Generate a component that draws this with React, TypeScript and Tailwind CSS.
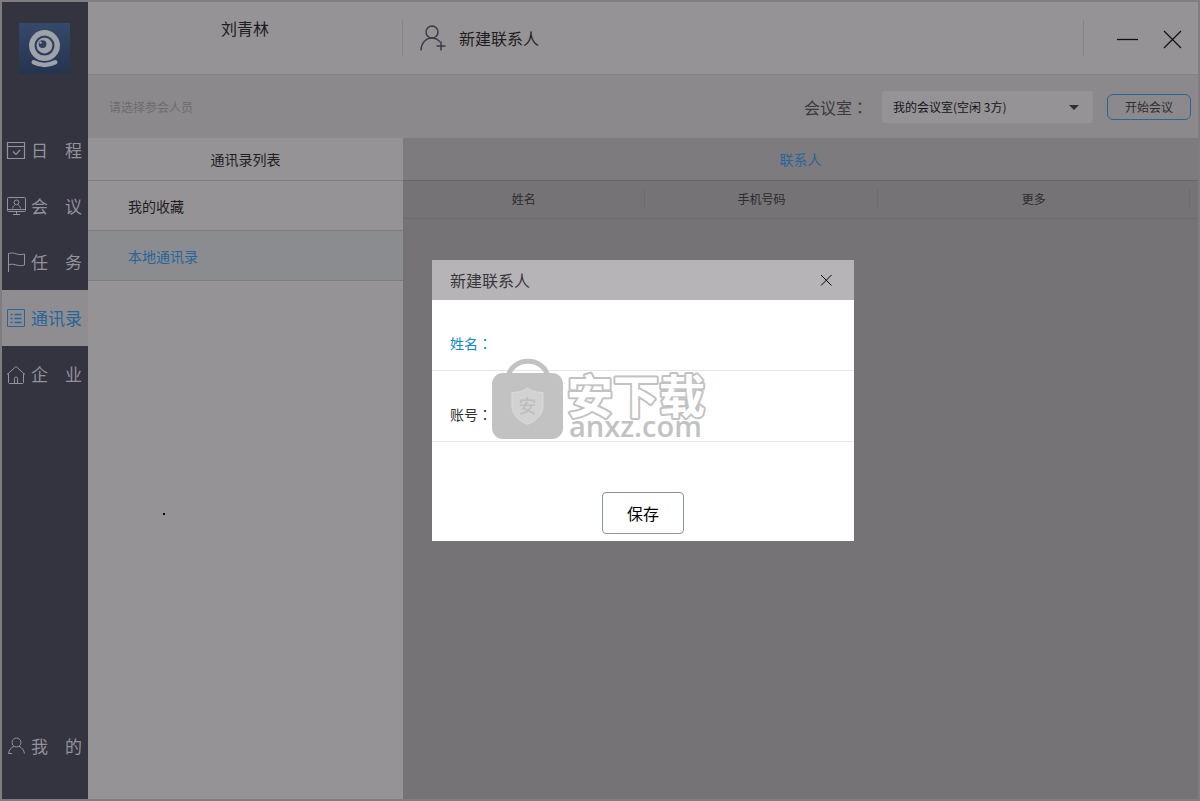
import type { ReactNode } from "react";

type IconProps = { children: ReactNode };

function NavIcon({ children }: IconProps) {
  return (
    <svg
      className="h-5 w-5 shrink-0"
      viewBox="0 0 20 20"
      fill="none"
      stroke="currentColor"
      aria-hidden="true"
    >
      {children}
    </svg>
  );
}

const navItems = [
  {
    label: "日　程",
    icon: (
      <NavIcon>
        <path d="M1.5 2.5h17v16h-17zM1.5 6.5h17M7 11.5l3 3 4-4.5" strokeWidth="1.2" />
      </NavIcon>
    ),
  },
  {
    label: "会　议",
    icon: (
      <NavIcon>
        <path d="M2.5 1.5h16a1 1 0 0 1 1 1v12a1 1 0 0 1-1 1h-16a1 1 0 0 1-1-1v-12a1 1 0 0 1 1-1zM1.5 13.5h18M10.5 15.5v3M7 18.5h7" />
        <path d="M10.5 4a2.400 2.400 0 1 1 0 4.800a2.400 2.400 0 1 1 0-4.800M6.5 12.500c.3-2 1.500-3 2.800-3.800M14.500 12.500c-.3-2-1.500-3-2.800-3.800" />
      </NavIcon>
    ),
  },
  {
    label: "任　务",
    icon: (
      <NavIcon>
        <path d="M2.5 20V1.500c3-.8 5-.6 7.500.3s5 1 8.500.2v11c-3 1-5.500.8-8.500-.1s-5-.9-7.500 0" />
      </NavIcon>
    ),
  },
  {
    label: "通讯录",
    active: true,
    icon: (
      <NavIcon>
        <path d="M1.5 1.5h17v17h-17z" />
        <path d="M4.5 6.500h2M4.500 10.500h2M4.500 14.500h2M8.500 6.500h7M8.500 10.500h7M8.500 14.500h7" strokeWidth="1.300" />
      </NavIcon>
    ),
  },
  {
    label: "企　业",
    icon: (
      <NavIcon>
        <path d="M1 10.500L10 2.500l9 8M2.500 9.500v9a1 1 0 0 0 1 1h13a1 1 0 0 0 1-1v-9M8.500 19.500v-5a1.500 1.500 0 0 1 3 0v5" />
      </NavIcon>
    ),
  },
];

function NavLink({ label, icon, active }: { label: string; icon: ReactNode; active?: boolean }) {
  return (
    <a
      href="#"
      className={
        "flex h-14 items-center gap-[5px] pl-1 text-[17px] leading-6 whitespace-nowrap " +
        (active ? "bg-[#8f8d90] text-[#28659a]" : "text-[#92929a]")
      }
    >
      {icon}
      <span>{label}</span>
    </a>
  );
}

function Logo() {
  return (
    <svg className="mt-[21px] ml-[17px] h-[51px] w-[51px]" viewBox="0 0 52 52" role="img" aria-label="Logo">
      <defs>
        <linearGradient id="logo-bg" x1="0" y1="0" x2="0" y2="1">
          <stop offset="0" stopColor="#35496b" />
          <stop offset="1" stopColor="#23344e" />
        </linearGradient>
      </defs>
      <rect width="52" height="52" fill="url(#logo-bg)" />
      <circle cx="26" cy="23" r="13" fill="none" stroke="#a0a2a9" strokeWidth="5.500" />
      <circle cx="26" cy="23" r="8" fill="#a0a2a9" />
      <circle cx="24" cy="21.500" r="4" fill="#2d405f" />
      <circle cx="22" cy="20" r="1.200" fill="#a0a2a9" />
      <path d="M15 40q11 5.500 22 0" fill="none" stroke="#a0a2a9" strokeWidth="4.500" strokeLinecap="round" />
    </svg>
  );
}

function Sidebar() {
  return (
    <aside className="flex w-[86px] shrink-0 flex-col bg-[#343441]">
      <Logo />
      <nav className="mt-12 flex flex-1 flex-col pb-[25px]">
        {navItems.map((item) => (
          <NavLink key={item.label} {...item} />
        ))}
        <div className="mt-auto">
          <NavLink
            label="我　的"
            icon={
              <NavIcon>
                <path d="M10.5 2a4.500 4.500 0 1 1 0 9a4.500 4.500 0 1 1 0-9M8 10.300C5 11.500 3 14 2.500 17.500H6M13 10.300c3 1.200 4.800 3.700 5.500 7.200" />
              </NavIcon>
            }
          />
        </div>
      </nav>
    </aside>
  );
}

function Header() {
  return (
    <header className="flex h-[73px] items-center border-b border-[#858387] bg-[#969396] text-base text-[#1d1c20]">
      <div className="flex w-[314px] shrink-0 justify-center self-stretch pt-[14px]">
        <span className="leading-6">刘青林</span>
      </div>
      <div className="h-9 w-px bg-[#858387]" />
      <button type="button" className="flex items-center gap-3 pl-4">
        <svg className="h-7 w-7" viewBox="0 0 28 28" fill="none" stroke="#3c3c48" strokeWidth="1.500" aria-hidden="true">
          <circle cx="13" cy="8" r="6" />
          <path d="M2 26.500c0-7 4.500-12.500 11-12.500c3.500 0 6 1.500 8 4M22 17.500v9M17.500 22h9" />
        </svg>
        新建联系人
      </button>
      <div className="ml-auto h-9 w-px bg-[#858387]" />
      <button type="button" aria-label="最小化" className="ml-8">
        <svg className="h-6 w-6" viewBox="0 0 24 24" stroke="#111" aria-hidden="true">
          <path d="M1 13.500h21" strokeWidth="1.300" />
        </svg>
      </button>
      <button type="button" aria-label="关闭" className="mr-[14px] ml-5">
        <svg className="h-6 w-6" viewBox="0 0 24 24" stroke="#111" strokeWidth="1.200" aria-hidden="true">
          <path d="M4 5l17 17M21 5L4 22" />
        </svg>
      </button>
    </header>
  );
}

// The TC face centres the full-width colon in its em box.
function Colon() {
  return <span className="font-['Noto_Sans_CJK_TC',sans-serif]">：</span>;
}

function Toolbar() {
  return (
    <div className="flex h-[63px] items-center bg-[#8b898b] pr-[7px] pl-[21px]">
      <input
        type="text"
        aria-label="参会人员"
        placeholder="请选择参会人员"
        className="min-w-0 flex-1 text-xs outline-none placeholder:text-[#6d6b6e]"
      />
      <label htmlFor="room" className="text-base text-[#3c3a3e]">
        会议室
        <Colon />
      </label>
      <div className="relative ml-[14px]">
        <select
          id="room"
          className="h-8 w-[211px] appearance-none rounded-[3px] bg-[#969396] px-[11px] text-xs text-[#151417] outline-none"
        >
          <option>我的会议室(空闲 3方)</option>
        </select>
        <svg className="pointer-events-none absolute top-[14px] right-[14px] h-[5px] w-[10px]" viewBox="0 0 10 5" aria-hidden="true">
          <path d="M0 0h10L5 5z" fill="#2f2e33" />
        </svg>
      </div>
      <button
        type="button"
        className="ml-[14px] h-[26px] w-[84px] rounded-md border border-[#2c6591] text-xs text-[#2f2d31]"
      >
        开始会议
      </button>
    </div>
  );
}

function ContactLists() {
  return (
    <section className="relative w-[315px] shrink-0 bg-[#969396] text-sm text-[#1f1e22]">
      <h2 className="flex h-[43px] items-center justify-center border-b border-[#7e7c80]">
        通讯录列表
      </h2>
      <ul>
        <li>
          <a href="#" className="flex h-[50px] items-center border-b border-[#7e7c80] pl-10">
            我的收藏
          </a>
        </li>
        <li>
          <a href="#" className="flex h-[50px] items-center border-b border-[#7e7c80] bg-[#8a8c8f] pl-10 text-[#28659a]">
            本地通讯录
          </a>
        </li>
      </ul>
      <span className="absolute top-[375px] left-[75px] h-0.5 w-0.5 bg-black" />
    </section>
  );
}

function ColumnTitle({ children }: { children: ReactNode }) {
  return (
    <th className="p-0 font-normal">
      <div className="border-r border-[#6d6b6f] leading-5">{children}</div>
    </th>
  );
}

function Contacts() {
  return (
    <section className="min-w-0 flex-1 bg-[#767376]">
      <h2 className="flex h-[43px] items-center justify-center border-b border-[#69676b] bg-[#7e7b7e] text-sm text-[#28659a]">
        联系人
      </h2>
      <table className="w-full table-fixed text-xs text-[#2b2a2e]">
        <colgroup>
          <col className="w-[30.5%]" />
          <col className="w-[29.3%]" />
          <col className="w-[39.2%]" />
          <col className="w-[1%]" />
        </colgroup>
        <thead>
          <tr className="h-[37px] border-b border-[#6d6b6f]">
            <ColumnTitle>姓名</ColumnTitle>
            <ColumnTitle>手机号码</ColumnTitle>
            <ColumnTitle>更多</ColumnTitle>
            <td />
          </tr>
        </thead>
      </table>
    </section>
  );
}

function Watermark() {
  return (
    <svg
      className="pointer-events-none absolute top-[97px] left-[58px] h-[96px] w-[230px]"
      viewBox="0 0 230 96"
      aria-hidden="true"
    >
      <path d="M18 20C22 -1 54 -1 58 20" fill="none" stroke="#c2c2c2" strokeWidth="5" />
      <rect x="2" y="16" width="71" height="66" rx="11" fill="#c2c2c2" />
      <path
        d="M37.500 31c5 3.500 10 4.500 15.500 4.500V49c0 9-6.500 14.500-15.500 18.500C28.500 63.500 22 58 22 49V35.500C27.500 35.500 32.500 34.500 37.500 31z"
        fill="#d2d2d2"
        stroke="#dadada"
      />
      <text
        x="37.500"
        y="56"
        textAnchor="middle"
        className="fill-[#bebebe] font-['Noto_Sans_CJK_SC',sans-serif] text-[18px] font-medium"
      >
        安
      </text>
      <text
        x="77"
        y="56"
        strokeWidth="4"
        strokeLinejoin="round"
        paintOrder="stroke"
        className="fill-white stroke-[#c2c2c2] font-['Noto_Sans_CJK_SC',sans-serif] text-[46px] font-bold"
      >
        安下载
      </text>
      <text x="79" y="80" className="fill-[#c2c2c2] font-['Open_Sans',sans-serif] text-[29px] font-semibold">
        anxz.com
      </text>
    </svg>
  );
}

function NewContactDialog() {
  return (
    <div className="fixed inset-0 flex items-center justify-center pl-[86px]">
      <form
        role="dialog"
        aria-labelledby="dialog-title"
        className="relative w-[422px] bg-white text-sm"
        onSubmit={(e) => e.preventDefault()}
      >
        <div className="flex h-10 items-center justify-between bg-[#b6b4b7] pr-5 pl-[18px]">
          <h2 id="dialog-title" className="text-base text-[#38363a]">
            新建联系人
          </h2>
          <button type="button" aria-label="关闭">
            <svg className="h-4 w-4" viewBox="0 0 16 16" stroke="#000" aria-hidden="true">
              <path d="M3 3l10.500 10.500M13.500 3L3 13.500" />
            </svg>
          </button>
        </div>
        <div className="flex h-[71px] items-end border-b border-[#e6e6e6] px-[18px] pb-[17px]">
          <label htmlFor="name" className="leading-5 text-[#1486cc]">
            姓名
            <Colon />
          </label>
          <input id="name" type="text" className="h-5 min-w-0 flex-1 outline-none" />
        </div>
        <div className="flex h-[71px] items-end border-b border-[#e6e6e6] px-[18px] pb-[17px]">
          <label htmlFor="account" className="leading-5 text-[#333]">
            账号
            <Colon />
          </label>
          <input id="account" type="text" className="h-5 min-w-0 flex-1 outline-none" />
        </div>
        <div className="flex justify-center pt-[50px] pb-[7px]">
          <button
            type="submit"
            className="h-[42px] w-[82px] rounded border border-[#8593ab] bg-white text-base text-black"
          >
            保存
          </button>
        </div>
        <Watermark />
      </form>
    </div>
  );
}

export default function App() {
  return (
    <div className="flex min-h-screen border-2 border-[#7f7d80] font-['Noto_Sans_CJK_SC',sans-serif]">
      <Sidebar />
      <main className="flex min-w-0 flex-1 flex-col">
        <Header />
        <Toolbar />
        <div className="flex flex-1">
          <ContactLists />
          <Contacts />
        </div>
      </main>
      <NewContactDialog />
    </div>
  );
}
